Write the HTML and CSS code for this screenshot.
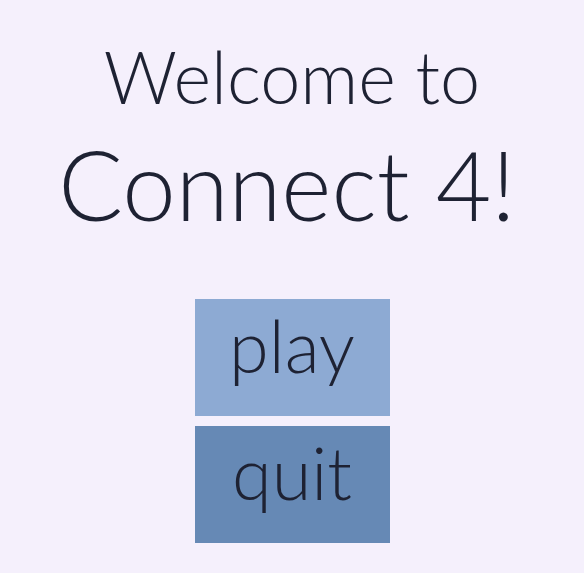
FILE: index.html
```html
<!DOCTYPE html>
<html>
<head>
<title>Connect 4</title>
<link rel="stylesheet" href="styles.css">
</head>
<body>

<div class="menu">
  <h1 class="title">
    <span class="welcome">Welcome to</span>
    <span class="game">Connect 4!</span>
  </h1>

  <div class="buttons">
    <button class="btn btnPlay">play</button>
    <button class="btn btnQuit">quit</button>
  </div>
</div>

</body>
</html>
```

FILE: styles.css
```css
body {
  margin: 0;
  background-color: #F5F0FC;
  color: #1E2233;
  font-family: Lato, "Open Sans", sans-serif;
  font-weight: 300;
}
.menu {
  display: flex;
  flex-direction: column;
  align-items: center;
  padding-top: 40px;
}
.title {
  margin: 0;
  font-weight: 300;
  text-align: center;
}
.title span {
  display: block;
  line-height: 1;
}
.welcome {
  font-size: 72px;
}
.game {
  font-size: 96px;
  margin-top: 24px;
  margin-right: 10px;
}
.buttons {
  display: flex;
  flex-direction: column;
  gap: 10px;
  margin-top: 67px;
}
.btn {
  width: 195px;
  height: 117px;
  border: 0;
  padding: 0 0 26px 0;
  font-family: inherit;
  font-weight: 300;
  font-size: 72px;
  color: #1E2233;
  cursor: pointer;
}
.btnPlay {
  background-color: #8DAAD3;
}
.btnQuit {
  background-color: #6689B5;
}
```
